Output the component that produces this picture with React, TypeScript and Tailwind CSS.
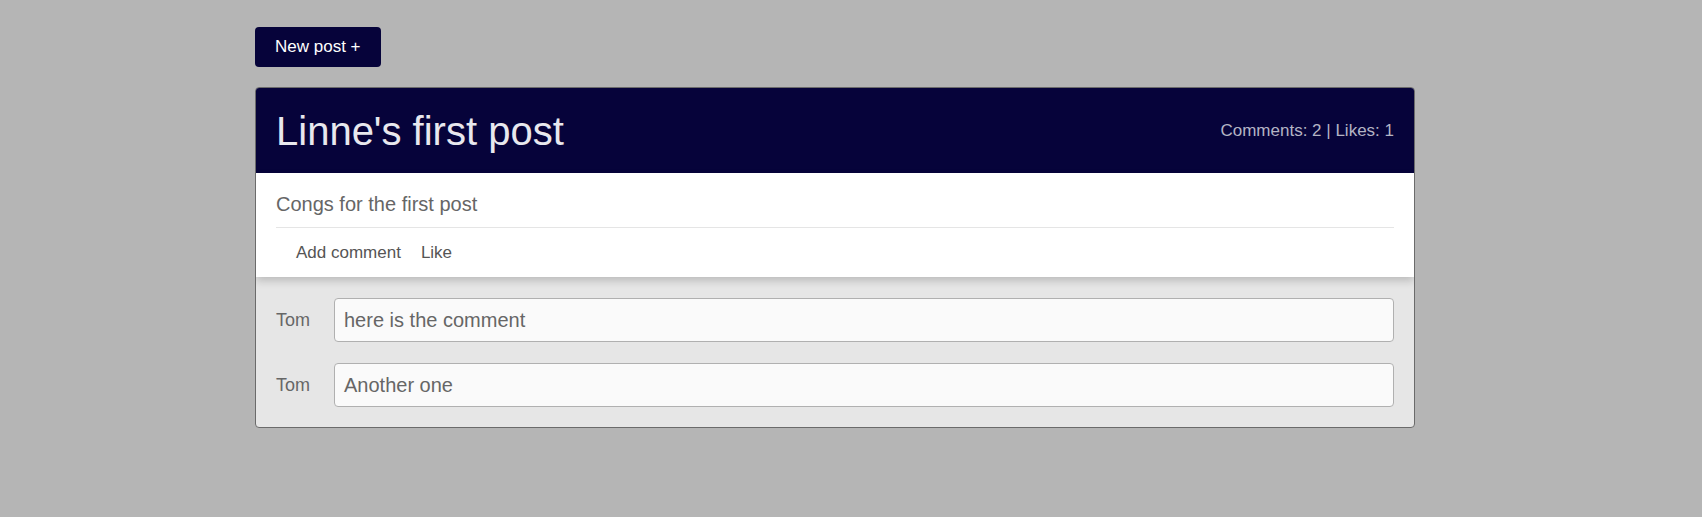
import React from "react";

const comments = [
  { author: "Tom", text: "here is the comment" },
  { author: "Tom", text: "Another one" },
];

export default function App() {
  return (
    <div className="min-h-[517px] bg-[#b5b5b5] pt-[27px] pl-[255px] font-['Liberation_Sans',Arial,sans-serif] text-[17px]">
      <button className="h-10 rounded bg-[#06033a] px-5 text-[17px] text-white">
        New post +
      </button>

      <div className="mt-5 w-[1160px] overflow-hidden rounded border border-[#6b6b6b] bg-[#e6e6e6]">
        {/* Header */}
        <div className="flex h-[85px] items-center justify-between bg-[#06033a] px-5">
          <h1 className="text-[40px] leading-none text-[#e8e8ee]">Linne's first post</h1>
          <span className="text-[17px] text-[#b4b4c4]">Comments: 2 | Likes: 1</span>
        </div>

        {/* Body */}
        <div className="relative z-10 bg-white px-5 shadow-[0_4px_8px_rgba(0,0,0,0.18)]">
          <p className="pt-5 pb-[11px] text-[20px] leading-[23px] text-[#666]">
            Congs for the first post
          </p>
          <div className="flex gap-5 border-t border-[#e5e5e5] pt-[15px] pb-[14px] pl-5 text-[17px] leading-[20px] text-[#555]">
            <span>Add comment</span>
            <span>Like</span>
          </div>
        </div>

        {/* Comments */}
        <div className="flex flex-col gap-[21px] px-5 pt-[21px] pb-5">
          {comments.map((c, i) => (
            <div key={i} className="flex items-start">
              <span className="w-[58px] shrink-0 pt-3 text-[18px] leading-[21px] text-[#666]">
                {c.author}
              </span>
              <div className="flex h-11 flex-1 items-center rounded border border-[#b0b0b0] bg-[#fafafa] px-[9px] text-[20px] text-[#666]">
                {c.text}
              </div>
            </div>
          ))}
        </div>
      </div>
    </div>
  );
}
